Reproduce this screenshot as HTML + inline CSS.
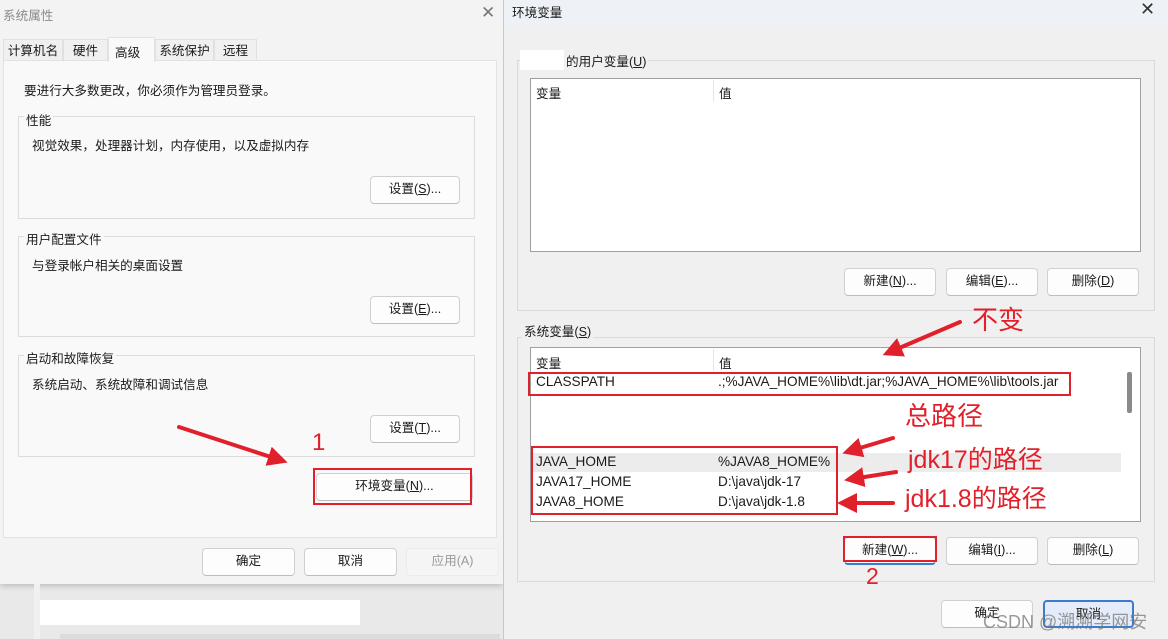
<!DOCTYPE html>
<html><head><meta charset="utf-8"><style>
*{margin:0;padding:0;box-sizing:border-box}
body{width:1168px;height:639px;position:relative;overflow:hidden;background:#e9e9e9;font-family:"Liberation Sans","Noto Sans CJK SC",sans-serif;font-size:12.6px;color:#1a1a1a}
.a{position:absolute}
.btn{position:absolute;background:#fdfdfd;border:1px solid #d0d0d0;border-bottom-color:#bdbdbd;border-radius:4px;text-align:center;font-size:12.6px;line-height:25px;color:#1a1a1a}
.gb{position:absolute;border:1px solid #dcdcdc}
.red{position:absolute;border:2px solid #e0202a}
.rt{position:absolute;color:#e0202a;font-size:25px;font-family:"Liberation Sans","Noto Sans CJK SC",sans-serif;line-height:1}
.v{font-size:13.6px}
</style></head><body>
<div class="a" style="left:0;top:0;width:503px;height:584px;background:#f3f3f3;box-shadow:0 2px 6px rgba(0,0,0,.2)"></div>
<div class="a" style="left:3px;top:5px;color:#8a8a8a">系统属性</div>
<div class="a" style="left:481px;top:3px;color:#777;font-size:17px">✕</div>
<div class="a" style="left:3px;top:39px;width:60px;height:22px;border:1px solid #e0e0e0;border-bottom:none;background:#f0f0f0;text-align:center;line-height:22px">计算机名</div>
<div class="a" style="left:63px;top:39px;width:45px;height:22px;border:1px solid #e0e0e0;border-bottom:none;background:#f0f0f0;text-align:center;line-height:22px">硬件</div>
<div class="a" style="left:155px;top:39px;width:59px;height:22px;border:1px solid #e0e0e0;border-bottom:none;background:#f0f0f0;text-align:center;line-height:22px">系统保护</div>
<div class="a" style="left:214px;top:39px;width:43px;height:22px;border:1px solid #e0e0e0;border-bottom:none;background:#f0f0f0;text-align:center;line-height:22px">远程</div>
<div class="a" style="left:3px;top:60px;width:494px;height:478px;background:#f9f9f9;border:1px solid #e2e2e2"></div>
<div class="a" style="left:108px;top:37px;width:47px;height:25px;background:#f9f9f9;border:1px solid #e2e2e2;border-bottom:none;padding:4px 0 0 6px">高级</div>
<div class="a" style="left:24px;top:80px">要进行大多数更改，你必须作为管理员登录。</div>
<div class="gb" style="left:18px;top:116px;width:457px;height:103px"></div>
<div class="a" style="left:24px;top:110px;background:#f9f9f9;padding:0 2px">性能</div>
<div class="a" style="left:32px;top:135px">视觉效果，处理器计划，内存使用，以及虚拟内存</div>
<div class="btn" style="left:370px;top:176px;width:90px;height:28px">设置(<u>S</u>)...</div>
<div class="gb" style="left:18px;top:236px;width:457px;height:101px"></div>
<div class="a" style="left:24px;top:229px;background:#f9f9f9;padding:0 2px">用户配置文件</div>
<div class="a" style="left:32px;top:255px">与登录帐户相关的桌面设置</div>
<div class="btn" style="left:370px;top:296px;width:90px;height:28px">设置(<u>E</u>)...</div>
<div class="gb" style="left:18px;top:355px;width:457px;height:102px"></div>
<div class="a" style="left:24px;top:348px;background:#f9f9f9;padding:0 2px">启动和故障恢复</div>
<div class="a" style="left:32px;top:374px">系统启动、系统故障和调试信息</div>
<div class="btn" style="left:370px;top:415px;width:90px;height:28px">设置(<u>T</u>)...</div>
<div class="btn" style="left:316px;top:473px;width:157px;height:28px">环境变量(<u>N</u>)...</div>
<div class="red" style="left:313px;top:468px;width:159px;height:37px"></div>
<div class="btn" style="left:202px;top:548px;width:93px;height:28px">确定</div>
<div class="btn" style="left:304px;top:548px;width:93px;height:28px">取消</div>
<div class="btn" style="left:406px;top:548px;width:93px;height:28px;background:#f5f5f5;color:#9a9a9a;border-color:#ececec">应用(A)</div>
<div class="a" style="left:40px;top:600px;width:320px;height:25px;background:#fff"></div>
<div class="a" style="left:34px;top:584px;width:6px;height:55px;background:#f0f0f0"></div>
<div class="a" style="left:60px;top:634px;width:440px;height:5px;background:#dcdcdc"></div>
<div class="rt" style="left:312px;top:431px;font-size:24px">1</div>
<div class="a" style="left:503px;top:0;width:665px;height:639px;background:#f0f0f0;border-left:1px solid #c8c8c8"></div>
<div class="a" style="left:504px;top:0;width:664px;height:26px;background:#eef2f6"></div>
<div class="a" style="left:512px;top:2px">环境变量</div>
<div class="a" style="left:1140px;top:-1px;font-size:18px;color:#333">✕</div>
<div class="gb" style="left:517px;top:60px;width:638px;height:251px;border-color:#dadada"></div>
<div class="a" style="left:520px;top:50px;width:44px;height:20px;background:#fff"></div>
<div class="a" style="left:564px;top:51px;background:#f0f0f0;padding:0 2px">的用户变量(<u>U</u>)</div>
<div class="a" style="left:530px;top:78px;width:611px;height:174px;background:#fff;border:1px solid #a0a0a0"></div>
<div class="a" style="left:536px;top:83px">变量</div>
<div class="a" style="left:713px;top:80px;width:1px;height:22px;background:#e5e5e5"></div>
<div class="a" style="left:719px;top:83px">值</div>
<div class="btn" style="left:844px;top:268px;width:92px;height:28px">新建(<u>N</u>)...</div>
<div class="btn" style="left:946px;top:268px;width:92px;height:28px">编辑(<u>E</u>)...</div>
<div class="btn" style="left:1047px;top:268px;width:92px;height:28px">删除(<u>D</u>)</div>
<div class="gb" style="left:517px;top:337px;width:638px;height:245px;border-color:#dadada"></div>
<div class="a" style="left:522px;top:321px;background:#f0f0f0;padding:0 2px">系统变量(<u>S</u>)</div>
<div class="a" style="left:530px;top:347px;width:611px;height:175px;background:#fff;border:1px solid #a0a0a0"></div>
<div class="a" style="left:536px;top:353px">变量</div>
<div class="a" style="left:713px;top:349px;width:1px;height:22px;background:#e5e5e5"></div>
<div class="a" style="left:719px;top:353px">值</div>
<div class="a" style="left:1127px;top:372px;width:5px;height:41px;background:#8a8a8a;border-radius:2px"></div>
<div class="a v" style="left:536px;top:374px">CLASSPATH</div>
<div class="a v" style="left:718px;top:374px">.;%JAVA_HOME%\lib\dt.jar;%JAVA_HOME%\lib\tools.jar</div>
<div class="red" style="left:528px;top:372px;width:543px;height:24px"></div>
<div class="a" style="left:531px;top:453px;width:590px;height:19px;background:#ececec"></div>
<div class="a v" style="left:536px;top:454px">JAVA_HOME</div>
<div class="a v" style="left:718px;top:454px">%JAVA8_HOME%</div>
<div class="a v" style="left:536px;top:474px">JAVA17_HOME</div>
<div class="a v" style="left:718px;top:474px">D:\java\jdk-17</div>
<div class="a v" style="left:536px;top:494px">JAVA8_HOME</div>
<div class="a v" style="left:718px;top:494px">D:\java\jdk-1.8</div>
<div class="red" style="left:531px;top:446px;width:307px;height:69px"></div>
<div class="btn" style="left:844px;top:537px;width:92px;height:28px;border-bottom:2px solid #3b7bd0">新建(<u>W</u>)...</div>
<div class="red" style="left:843px;top:536px;width:94px;height:26px"></div>
<div class="btn" style="left:946px;top:537px;width:92px;height:28px">编辑(<u>I</u>)...</div>
<div class="btn" style="left:1047px;top:537px;width:92px;height:28px">删除(<u>L</u>)</div>
<div class="rt" style="left:866px;top:565px;font-size:23px">2</div>
<div class="btn" style="left:941px;top:600px;width:92px;height:28px">确定</div>
<div class="btn" style="left:1043px;top:600px;width:91px;height:28px;background:#e3ecf8;border:2px solid #3b7bd0">取消</div>
<div class="a" style="left:983px;top:608px;font-size:18px;color:rgba(120,120,120,.75)">CSDN @溯溯学网安</div>
<div class="rt" style="left:972px;top:307px;font-size:26px">不变</div>
<div class="rt" style="left:905px;top:403px;font-size:26px">总路径</div>
<div class="rt" style="left:908px;top:448px">jdk17的路径</div>
<div class="rt" style="left:905px;top:487px">jdk1.8的路径</div>
<svg class="a" style="left:0;top:0" width="1168" height="639">
<defs><marker id="m" markerWidth="5" markerHeight="5" refX="3" refY="2.5" orient="auto" markerUnits="strokeWidth"><path d="M0,0 L5,2.5 L0,5 Z" fill="#e0202a"/></marker></defs>
<g stroke="#e0202a" stroke-width="4" fill="none" stroke-linecap="round">
<line x1="179" y1="427" x2="280" y2="460" marker-end="url(#m)"/>
<line x1="960" y1="322" x2="890" y2="352" marker-end="url(#m)"/>
<line x1="893" y1="438" x2="850" y2="451" marker-end="url(#m)"/>
<line x1="896" y1="472" x2="852" y2="479" marker-end="url(#m)"/>
<line x1="893" y1="503" x2="845" y2="503" marker-end="url(#m)"/>
</g></svg>
</body></html>
